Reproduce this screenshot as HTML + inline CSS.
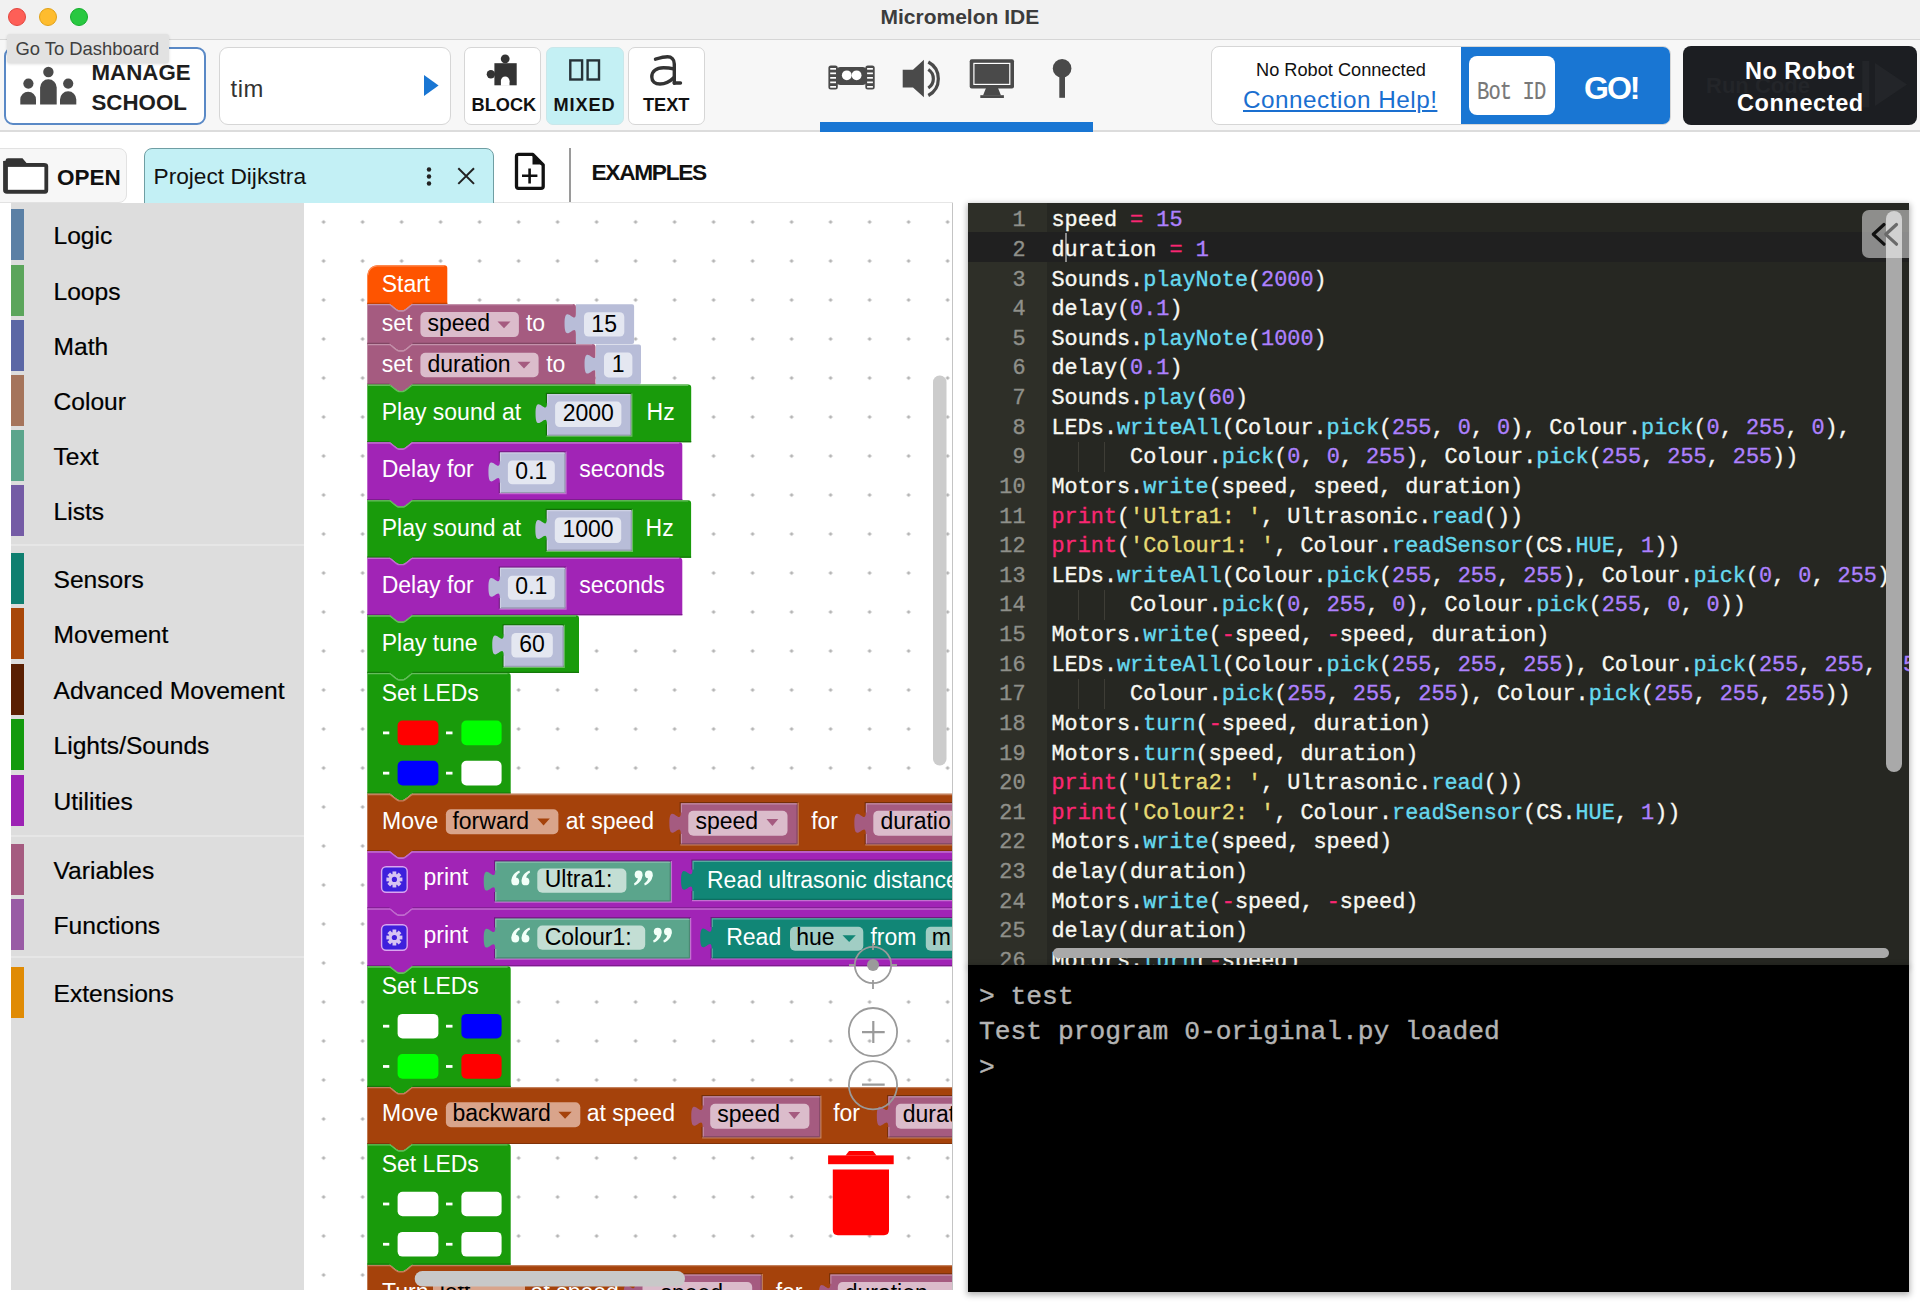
<!DOCTYPE html>
<html><head><meta charset="utf-8">
<style>
*{margin:0;padding:0;box-sizing:border-box}
html,body{width:1920px;height:1302px;overflow:hidden;background:#fff;font-family:"Liberation Sans",sans-serif;position:relative}
.a{position:absolute}
.t{position:absolute;white-space:nowrap;line-height:1}
#titlebar{left:0;top:0;width:1920px;height:40px;background:#f1f1f1;border-bottom:1px solid #d6d6d6}
.tl{position:absolute;top:8px;width:18px;height:18px;border-radius:50%}
#toolbar{left:0;top:40px;width:1920px;height:92px;background:#f7f7f7;border-bottom:2px solid #dcdcdc}
.btn{position:absolute;background:#fff;border:1.5px solid #d6d6d6;border-radius:7px}
#sidebar{left:11px;top:203px;width:293px;height:1087px;background:#dddddd}
.cat{position:absolute;left:0;width:13px;height:51px}
.cl{position:absolute;left:42.5px;font-size:24.6px;color:#000;white-space:nowrap;line-height:1;-webkit-text-stroke:0.2px #000}
.sep{position:absolute;left:0;width:293px;height:2px;background:#e6e6e6}
#editor{left:968px;top:203px;width:941px;height:762px;background:#262722;overflow:hidden;box-shadow:0 2px 6px 1px rgba(0,0,0,0.3)}
#gutter{left:0;top:0;width:79px;height:762px;background:#2e2f28}
#console{left:968px;top:965px;width:941px;height:327px;background:#000;box-shadow:0 2px 6px 1px rgba(0,0,0,0.3)}
.code{font-family:"Liberation Mono",monospace;font-size:21.83px;color:#f8f8f2;white-space:pre;line-height:29.62px;-webkit-text-stroke:0.35px currentColor}
</style></head><body>
<!-- title bar -->
<div id="titlebar" class="a">
  <div class="tl" style="left:8px;background:#fe5f57;border:1px solid #e2463f"></div>
  <div class="tl" style="left:39px;background:#febc2e;border:1px solid #e1a116"></div>
  <div class="tl" style="left:70px;background:#28c840;border:1px solid #14ae2c"></div>
  <div class="t" style="left:880.5px;top:5.5px;font-size:21px;font-weight:bold;color:#3c3c3c">Micromelon IDE</div>
</div>
<!-- toolbar -->
<div id="toolbar" class="a"></div>
<!-- manage school -->
<div class="btn" style="left:4px;top:47px;width:202px;height:78px;border:2px solid #5a89c6;border-radius:9px"></div>
<svg class="a" style="left:0;top:40px" width="90" height="90" viewBox="0 40 90 90">
 <g fill="#4a4a4a">
  <circle cx="48.4" cy="72" r="5.2"/>
  <path d="M40.1 104.4 V87.5 A8.3 8.3 0 0 1 56.7 87.5 V104.4 Z"/>
  <circle cx="28.4" cy="83.6" r="5.1"/>
  <path d="M20.3 104.4 V99.5 A7.85 7.85 0 0 1 36 99.5 V104.4 Z"/>
  <circle cx="68.2" cy="83.6" r="5.1"/>
  <path d="M60 104.4 V99.5 A8.15 8.15 0 0 1 76.3 99.5 V104.4 Z"/>
 </g>
</svg>
<div class="t" style="left:91.5px;top:62px;font-size:22.3px;font-weight:bold;color:#1e1e1e">MANAGE</div>
<div class="t" style="left:91.5px;top:91.5px;font-size:22.3px;font-weight:bold;color:#1e1e1e">SCHOOL</div>
<!-- tooltip -->
<div class="a" style="left:7px;top:34px;width:162px;height:29px;background:#e2e2e2;border-radius:3px;box-shadow:0 1px 3px rgba(0,0,0,0.15)"></div>
<div class="t" style="left:15.5px;top:40px;font-size:18.4px;color:#3f3f3f">Go To Dashboard</div>
<!-- tim -->
<div class="btn" style="left:219px;top:47px;width:232px;height:78px;border-radius:9px"></div>
<div class="t" style="left:230.5px;top:77px;font-size:23.8px;color:#333;letter-spacing:0.6px">tim</div>
<svg class="a" style="left:420px;top:70px" width="24" height="30"><path d="M4 5 L18.6 15.5 L4 26 Z" fill="#1976d3"/></svg>
<!-- BLOCK MIXED TEXT -->
<div class="btn" style="left:464px;top:47px;width:77px;height:78px"></div>
<div class="btn" style="left:546px;top:47px;width:78px;height:78px;background:#c4f0f4;border-color:#c9e7ea"></div>
<div class="btn" style="left:628px;top:47px;width:77px;height:78px"></div>
<svg class="a" style="left:464px;top:47px" width="241" height="78" viewBox="464 47 241 78">
 <g fill="#333">
  <rect x="494.4" y="63.2" width="22.3" height="22.1"/>
  <circle cx="505.2" cy="58.8" r="4.4"/>
  <circle cx="490.9" cy="74.3" r="4.2"/>
 </g>
 <circle cx="505.2" cy="80.8" r="4.3" fill="#fff"/>
 <rect x="500.9" y="80.8" width="8.6" height="5" fill="#fff"/>
 <g fill="none" stroke="#263238" stroke-width="2.4">
  <rect x="570.3" y="60.4" width="11.8" height="19.1"/>
  <rect x="587.6" y="60.4" width="11.4" height="19.1"/>
 </g>
 <g fill="none" stroke="#333" stroke-width="3.4" stroke-linecap="round">
  <path d="M655.5 59.2 C662 57.3 665 56.8 667.5 56.8 C671.5 56.8 674.3 59.5 674.3 64 V83.3"/>
  <path d="M673.6 68.8 C670 68 666 67.8 663.5 67.8 C656 67.8 651.8 71.5 651.8 77 C651.8 81.5 655 84 660 84 C665 84 670 81.5 674 77.5"/>
  <path d="M674.3 83 H680.5"/>
 </g>
</svg>
<div class="t" style="left:471.5px;top:96px;font-size:18.2px;font-weight:bold;color:#111">BLOCK</div>
<div class="t" style="left:553.5px;top:96px;font-size:18.2px;font-weight:bold;color:#111;letter-spacing:0.9px">MIXED</div>
<div class="t" style="left:643px;top:96px;font-size:18.2px;font-weight:bold;color:#111">TEXT</div>
<!-- robot icons -->
<svg class="a" style="left:815px;top:50px" width="270" height="55" viewBox="815 50 270 55">
 <g fill="#4a4a4a">
  <rect x="828.4" y="65.4" width="9.4" height="24.2" rx="2.5"/>
  <rect x="865.3" y="65.4" width="9.4" height="24.2" rx="2.5"/>
  <rect x="836" y="66.9" width="31" height="18.2" rx="4.5"/>
 </g>
 <g fill="#fff">
  <rect x="830.2" y="68" width="5.8" height="1.7"/><rect x="830.2" y="72.5" width="5.8" height="1.7"/><rect x="830.2" y="77" width="5.8" height="1.7"/><rect x="830.2" y="81.5" width="5.8" height="1.7"/><rect x="830.2" y="86" width="5.8" height="1.7"/>
  <rect x="867.1" y="68" width="5.8" height="1.7"/><rect x="867.1" y="72.5" width="5.8" height="1.7"/><rect x="867.1" y="77" width="5.8" height="1.7"/><rect x="867.1" y="81.5" width="5.8" height="1.7"/><rect x="867.1" y="86" width="5.8" height="1.7"/>
  <circle cx="846.8" cy="75.3" r="4.9"/><circle cx="856.6" cy="75.3" r="4.9"/>
 </g>
 <g fill="#4a4a4a">
  <path d="M902.7 69.8 H913 L923.9 59.7 V97.3 L913 87.6 H902.7 Z"/>
  <rect x="969.7" y="59.2" width="44.3" height="29.4" rx="2"/>
  <path d="M986 88 H998 L1001 95.4 H983 Z"/>
  <rect x="980.3" y="95.2" width="23.6" height="2.8"/>
  <circle cx="1062.1" cy="68.4" r="9.3"/>
  <rect x="1059.3" y="70" width="5.7" height="27.8"/>
 </g>
 <rect x="973.3" y="62.8" width="37.1" height="22.2" fill="#fff"/>
 <rect x="974.5" y="64" width="34.7" height="19.8" fill="#4a4a4a"/>
 <g fill="none" stroke="#4a4a4a" stroke-width="3.2">
  <path d="M928.3 69.5 A11 11 0 0 1 928.3 88"/>
  <path d="M928.3 62 A19 19 0 0 1 928.3 95.5"/>
 </g>
</svg>
<div class="a" style="left:820px;top:122px;width:273px;height:10px;background:#1976d3"></div>
<!-- connection -->
<div class="a" style="left:1211px;top:46px;width:460px;height:79px;background:#fff;border:1.5px solid #d6d6d6;border-radius:8px;overflow:hidden">
  <div class="a" style="left:249px;top:-2px;width:212px;height:82px;background:#1976d3"></div>
</div>
<div class="t" style="left:1256px;top:60.5px;font-size:18.2px;color:#111">No Robot Connected</div>
<div class="t" style="left:1243px;top:88px;font-size:24.3px;letter-spacing:0.5px;color:#1a6fd0;text-decoration:underline;text-decoration-thickness:2px;text-underline-offset:2px">Connection Help!</div>
<div class="a" style="left:1469px;top:56px;width:86px;height:59px;background:#fff;border-radius:8px"></div>
<div class="t" style="left:1477px;top:81px;font-family:'Liberation Mono',monospace;font-size:20.5px;letter-spacing:-0.9px;color:#787878;-webkit-text-stroke:0.15px #787878;transform:scaleY(1.23);transform-origin:0 0">Bot ID</div>
<div class="t" style="left:1584px;top:71.5px;font-size:32px;letter-spacing:-2px;font-weight:bold;color:#fff">GO!</div>
<!-- run -->
<div class="a" style="left:1683px;top:46px;width:234px;height:79px;background:#1c1e22;border-radius:8px"></div>
<div class="t" style="left:1706px;top:75px;font-size:22px;font-weight:bold;color:#232529">Run Code</div>
<svg class="a" style="left:1855px;top:55px" width="60" height="60" viewBox="1855 55 60 60"><rect x="1862.3" y="61" width="7" height="46.4" fill="#232529"/><path d="M1875 63 L1907 84.5 L1875 106 Z" fill="#232529"/></svg>
<div class="t" style="left:1745px;top:60px;font-size:23.5px;letter-spacing:0.5px;font-weight:bold;color:#fff">No Robot</div>
<div class="t" style="left:1737px;top:91.5px;font-size:23.5px;letter-spacing:0.6px;font-weight:bold;color:#fff">Connected</div>

<!-- tab bar -->
<div class="a" style="left:-8px;top:148px;width:135px;height:55px;background:#f7f7f7;border:1.5px solid #e2e2e2;border-radius:8px"></div>
<svg class="a" style="left:0;top:150px" width="60" height="50" viewBox="0 150 60 50">
 <path d="M5.5 160.7 Q5.5 158.3 8 158.3 H22.5 L26.5 162.9 H44 Q48.2 162.9 48.2 166 V190 Q48.2 193.8 45 193.8 H7 Q3.1 193.8 3.1 190 V161 Z" fill="#333"/>
 <rect x="7.9" y="166.9" width="36.5" height="22.9" fill="#fff"/>
</svg>
<div class="t" style="left:57px;top:166.5px;font-size:22.5px;font-weight:bold;color:#111">OPEN</div>
<div class="a" style="left:144px;top:148px;width:350px;height:60px;background:#c3f0f5;border:1.5px solid #6f9ea3;border-radius:8px 8px 0 0"></div>
<div class="t" style="left:153.5px;top:165.3px;font-size:22.7px;color:#111">Project Dijkstra</div>
<svg class="a" style="left:410px;top:155px" width="80" height="40" viewBox="410 155 80 40">
 <g fill="#222"><circle cx="429" cy="169.5" r="2.2"/><circle cx="429" cy="176.5" r="2.2"/><circle cx="429" cy="183.5" r="2.2"/></g>
 <path d="M458.3 168.2 L474 183.9 M474 168.2 L458.3 183.9" stroke="#222" stroke-width="2" fill="none"/>
</svg>
<svg class="a" style="left:505px;top:145px" width="50" height="50" viewBox="505 145 50 50">
 <path d="M518.5 154.3 H532.8 L543.2 165 V186.5 Q543.2 188.3 541 188.3 H518.5 Q516.5 188.3 516.5 186.3 V156.3 Q516.5 154.3 518.5 154.3 Z" fill="none" stroke="#111" stroke-width="3.3" stroke-linejoin="round"/>
 <path d="M532.5 154 V164.5 H543.5 Z" fill="#111"/>
 <path d="M522 175.8 H537.4 M529.6 168.5 V183.5" stroke="#111" stroke-width="2.6"/>
</svg>
<div class="a" style="left:569px;top:148px;width:2px;height:55px;background:#9a9a9a"></div>
<div class="t" style="left:591.5px;top:161.3px;font-size:22.7px;letter-spacing:-1.3px;font-weight:bold;color:#111">EXAMPLES</div>
<div class="a" style="left:494px;top:202px;width:459px;height:2px;background:#e6e6e6"></div>
<!-- sidebar -->
<div id="sidebar" class="a">
 <div class="cat" style="top:6px;background:#5b80a5"></div><div class="cl" style="top:21px">Logic</div>
 <div class="cat" style="top:61.5px;background:#5ba55b"></div><div class="cl" style="top:76.5px">Loops</div>
 <div class="cat" style="top:117px;background:#5b67a5"></div><div class="cl" style="top:132px">Math</div>
 <div class="cat" style="top:172px;background:#a5745b"></div><div class="cl" style="top:187px">Colour</div>
 <div class="cat" style="top:227px;background:#5ba58c"></div><div class="cl" style="top:242px">Text</div>
 <div class="cat" style="top:282px;background:#745ba5"></div><div class="cl" style="top:297px">Lists</div>
 <div class="cat" style="top:350px;background:#0f7f70"></div><div class="cl" style="top:365px">Sensors</div>
 <div class="cat" style="top:405.29999999999995px;background:#a84709"></div><div class="cl" style="top:420.3px">Movement</div>
 <div class="cat" style="top:460.6px;background:#5a1f02"></div><div class="cl" style="top:475.6px">Advanced Movement</div>
 <div class="cat" style="top:516px;background:#139a0e"></div><div class="cl" style="top:531px">Lights/Sounds</div>
 <div class="cat" style="top:571.5px;background:#9c22b4"></div><div class="cl" style="top:586.5px">Utilities</div>
 <div class="cat" style="top:640.8px;background:#a55b80"></div><div class="cl" style="top:655.8px">Variables</div>
 <div class="cat" style="top:696px;background:#995ba5"></div><div class="cl" style="top:711px">Functions</div>
 <div class="cat" style="top:764px;background:#e08b04"></div><div class="cl" style="top:779px">Extensions</div>
 <div class="sep" style="top:340.5px"></div>
 <div class="sep" style="top:631.5px"></div>
 <div class="sep" style="top:753px"></div>
</div>
<!-- workspace -->
<!-- WS -->
<svg class="a" style="left:304px;top:203px" width="649" height="1087" viewBox="304 203 649 1087">
<defs><pattern id="dots" x="323.6" y="222" width="39" height="39" patternUnits="userSpaceOnUse"><g transform="translate(0,0)"><rect x="-2.1" y="-0.65" width="4.2" height="1.3" fill="#c4c4c4"/><rect x="-0.65" y="-2.1" width="1.3" height="4.2" fill="#c4c4c4"/><circle r="1.2" fill="#b4b4b4"/></g><g transform="translate(39,0)"><rect x="-2.1" y="-0.65" width="4.2" height="1.3" fill="#c4c4c4"/><rect x="-0.65" y="-2.1" width="1.3" height="4.2" fill="#c4c4c4"/><circle r="1.2" fill="#b4b4b4"/></g><g transform="translate(0,39)"><rect x="-2.1" y="-0.65" width="4.2" height="1.3" fill="#c4c4c4"/><rect x="-0.65" y="-2.1" width="1.3" height="4.2" fill="#c4c4c4"/><circle r="1.2" fill="#b4b4b4"/></g><g transform="translate(39,39)"><rect x="-2.1" y="-0.65" width="4.2" height="1.3" fill="#c4c4c4"/><rect x="-0.65" y="-2.1" width="1.3" height="4.2" fill="#c4c4c4"/><circle r="1.2" fill="#b4b4b4"/></g></pattern><clipPath id="wsclip"><rect x="304" y="203" width="648.5" height="1087"/></clipPath></defs>
<rect x="304" y="203" width="649" height="1087" fill="#fff"/><rect x="304" y="203" width="649" height="1087" fill="url(#dots)"/>
<g clip-path="url(#wsclip)" style="font-family:'Liberation Sans',sans-serif">
<path d="M367.3,275.2 A10,10 0 0 1 377.3,265.2 H444.3 A3,3 0 0 1 447.3,268.2 V304 H412.50 C411.00,304 405.50,310.3 403.00,310.3 H399.00 C396.50,310.3 391.00,304 389.50,304 H367.3 Z" fill="#fe5400" />
<path d="M367.90000000000003,275.2 A9.4,9.4 0 0 1 377.3,265.8 H444.3" fill="none" stroke="#fe8c54" stroke-width="1.3"/>
<path d="M367.3,303.4 H389.5 M412.5,303.4 H447.3" fill="none" stroke="#c64200" stroke-width="1.2"/>
<text x="381.70" y="292.30" fill="#fff" font-size="23" >Start</text>
<path d="M367.3,304 H389.50 C391.00,304 396.50,310.3 399.00,310.3 H403.00 C405.50,310.3 411.00,304 412.50,304 H572.9 A3,3 0 0 1 575.9,307 V344 H412.50 C411.00,344 405.50,350.3 403.00,350.3 H399.00 C396.50,350.3 391.00,344 389.50,344 H367.3 Z" fill="#a55b80" />
<path d="M367.3,304.7 H389.50 C391.00,304.7 396.50,311.0 399.00,311.0 H403.00 C405.50,311.0 411.00,304.7 412.50,304.7 H572.9" fill="none" stroke="#c391aa" stroke-width="1.3"/>
<path d="M367.3,343.4 H389.5 M412.5,343.4 H575.9" fill="none" stroke="#814764" stroke-width="1.2"/>
<text x="381.70" y="331.40" fill="#fff" font-size="23" >set</text>
<rect x="420.40" y="312.10" width="98.50" height="25.00" rx="5" fill="#dbbccb" />
<text x="427.45" y="331.40" fill="#000" font-size="23" >speed</text>
<path d="M497.5,321.5 H510.5 L504.0,328.2 Z" fill="#a55b80" />
<text x="525.90" y="331.40" fill="#fff" font-size="23" >to</text>
<path d="M576,304.2 H632.1 A2,2 0 0 1 634.1,306.2 V342 A2,2 0 0 1 632.1,344 H576 V334.50 c0,-14.33 -11.46,11.46 -11.46,-10.75 s11.46,3.58 11.46,-10.75 Z" fill="#b8bdd8" />
<rect x="584.00" y="312.30" width="40.30" height="24.20" rx="4.5" fill="#e4e7f1" />
<text x="604.15" y="332.00" fill="#000" font-size="23" text-anchor="middle" >15</text>
<path d="M367.3,344 H389.50 C391.00,344 396.50,350.3 399.00,350.3 H403.00 C405.50,350.3 411.00,344 412.50,344 H592.5 A3,3 0 0 1 595.5,347 V384.6 H412.50 C411.00,384.6 405.50,390.90000000000003 403.00,390.90000000000003 H399.00 C396.50,390.90000000000003 391.00,384.6 389.50,384.6 H367.3 Z" fill="#a55b80" />
<path d="M367.3,344.7 H389.50 C391.00,344.7 396.50,351.0 399.00,351.0 H403.00 C405.50,351.0 411.00,344.7 412.50,344.7 H592.5" fill="none" stroke="#c391aa" stroke-width="1.3"/>
<path d="M367.3,384.0 H389.5 M412.5,384.0 H595.5" fill="none" stroke="#814764" stroke-width="1.2"/>
<text x="381.70" y="371.50" fill="#fff" font-size="23" >set</text>
<rect x="420.40" y="352.70" width="118.20" height="24.50" rx="5" fill="#dbbccb" />
<text x="427.45" y="371.50" fill="#000" font-size="23" >duration</text>
<path d="M517.5,361.7 H530.5 L524.0,368.4 Z" fill="#a55b80" />
<text x="546.20" y="371.50" fill="#fff" font-size="23" >to</text>
<path d="M596,344.6 H639 A2,2 0 0 1 641,346.6 V382.6 A2,2 0 0 1 639,384.6 H596 V374.90 c0,-14.33 -11.46,11.46 -11.46,-10.75 s11.46,3.58 11.46,-10.75 Z" fill="#b8bdd8" />
<rect x="604.00" y="352.60" width="28.40" height="24.80" rx="4.5" fill="#e4e7f1" />
<text x="618.20" y="372.40" fill="#000" font-size="23" text-anchor="middle" >1</text>
<path d="M367.3,384.6 H389.50 C391.00,384.6 396.50,390.90000000000003 399.00,390.90000000000003 H403.00 C405.50,390.90000000000003 411.00,384.6 412.50,384.6 H688.2 A3,3 0 0 1 691.2,387.6 V442.3 H412.50 C411.00,442.3 405.50,448.6 403.00,448.6 H399.00 C396.50,448.6 391.00,442.3 389.50,442.3 H367.3 Z" fill="#199b0b" />
<path d="M367.3,385.3 H389.50 C391.00,385.3 396.50,391.6 399.00,391.6 H403.00 C405.50,391.6 411.00,385.3 412.50,385.3 H688.2" fill="none" stroke="#65bc5c" stroke-width="1.3"/>
<path d="M367.3,441.7 H389.5 M412.5,441.7 H691.2" fill="none" stroke="#147909" stroke-width="1.2"/>
<text x="381.70" y="420.00" fill="#fff" font-size="23" >Play sound at</text>
<path d="M546.5,435.8 V424.40 M546.5,402.90 V393.5 H631.8000000000001" fill="none" stroke="#126c08" stroke-width="1.3"/>
<path d="M546.5,436.20000000000005 H631.8000000000001 V393.5" fill="none" stroke="#6abe60" stroke-width="1.3"/>
<path d="M547,394.1 H629.2 A2,2 0 0 1 631.2,396.1 V433.6 A2,2 0 0 1 629.2,435.6 H547 V424.40 c0,-14.33 -11.46,11.46 -11.46,-10.75 s11.46,3.58 11.46,-10.75 Z" fill="#b8bdd8" />
<path d="M547.6,435.0 H630.6 V394.70000000000005" fill="none" stroke="#979bb1" stroke-width="1.1"/>
<path d="M547.6,424.40 V435.0 M547.6,402.90 V394.70000000000005 H630.6" fill="none" stroke="#cdd1e4" stroke-width="1.1"/>
<rect x="555.10" y="401.60" width="66.30" height="25.40" rx="4.5" fill="#e4e7f1" />
<text x="588.25" y="421.30" fill="#000" font-size="23" text-anchor="middle" >2000</text>
<text x="646.60" y="420.00" fill="#fff" font-size="23" >Hz</text>
<path d="M367.3,442.3 H389.50 C391.00,442.3 396.50,448.6 399.00,448.6 H403.00 C405.50,448.6 411.00,442.3 412.50,442.3 H679.3 A3,3 0 0 1 682.3,445.3 V500.2 H412.50 C411.00,500.2 405.50,506.5 403.00,506.5 H399.00 C396.50,506.5 391.00,500.2 389.50,500.2 H367.3 Z" fill="#a124b6" />
<path d="M367.3,443.0 H389.50 C391.00,443.0 396.50,449.3 399.00,449.3 H403.00 C405.50,449.3 411.00,443.0 412.50,443.0 H679.3" fill="none" stroke="#c06cce" stroke-width="1.3"/>
<path d="M367.3,499.59999999999997 H389.5 M412.5,499.59999999999997 H682.3" fill="none" stroke="#7e1c8e" stroke-width="1.2"/>
<text x="381.70" y="477.20" fill="#fff" font-size="23" >Delay for</text>
<path d="M499.4,493.3 V482.70 M499.4,461.20 V451.79999999999995 H566.0" fill="none" stroke="#71197f" stroke-width="1.3"/>
<path d="M499.4,493.70000000000005 H566.0 V451.79999999999995" fill="none" stroke="#c271d0" stroke-width="1.3"/>
<path d="M499.9,452.4 H563.4 A2,2 0 0 1 565.4,454.4 V491.1 A2,2 0 0 1 563.4,493.1 H499.9 V482.70 c0,-14.33 -11.46,11.46 -11.46,-10.75 s11.46,3.58 11.46,-10.75 Z" fill="#b8bdd8" />
<path d="M500.5,492.5 H564.8 V453.0" fill="none" stroke="#979bb1" stroke-width="1.1"/>
<path d="M500.5,482.70 V492.5 M500.5,461.20 V453.0 H564.8" fill="none" stroke="#cdd1e4" stroke-width="1.1"/>
<rect x="507.90" y="460.40" width="46.90" height="23.90" rx="4.5" fill="#e4e7f1" />
<text x="531.35" y="478.50" fill="#000" font-size="23" text-anchor="middle" >0.1</text>
<text x="579.20" y="477.20" fill="#fff" font-size="23" >seconds</text>
<path d="M367.3,500.2 H389.50 C391.00,500.2 396.50,506.5 399.00,506.5 H403.00 C405.50,506.5 411.00,500.2 412.50,500.2 H688.1 A3,3 0 0 1 691.1,503.2 V557.7 H412.50 C411.00,557.7 405.50,564.0 403.00,564.0 H399.00 C396.50,564.0 391.00,557.7 389.50,557.7 H367.3 Z" fill="#199b0b" />
<path d="M367.3,500.9 H389.50 C391.00,500.9 396.50,507.2 399.00,507.2 H403.00 C405.50,507.2 411.00,500.9 412.50,500.9 H688.1" fill="none" stroke="#65bc5c" stroke-width="1.3"/>
<path d="M367.3,557.1 H389.5 M412.5,557.1 H691.1" fill="none" stroke="#147909" stroke-width="1.2"/>
<text x="381.70" y="535.60" fill="#fff" font-size="23" >Play sound at</text>
<path d="M546.3,550.9000000000001 V540.30 M546.3,518.80 V509.4 H632.4" fill="none" stroke="#126c08" stroke-width="1.3"/>
<path d="M546.3,551.3000000000001 H632.4 V509.4" fill="none" stroke="#6abe60" stroke-width="1.3"/>
<path d="M546.8,510 H629.8 A2,2 0 0 1 631.8,512 V548.7 A2,2 0 0 1 629.8,550.7 H546.8 V540.30 c0,-14.33 -11.46,11.46 -11.46,-10.75 s11.46,3.58 11.46,-10.75 Z" fill="#b8bdd8" />
<path d="M547.4,550.1 H631.1999999999999 V510.6" fill="none" stroke="#979bb1" stroke-width="1.1"/>
<path d="M547.4,540.30 V550.1 M547.4,518.80 V510.6 H631.1999999999999" fill="none" stroke="#cdd1e4" stroke-width="1.1"/>
<rect x="554.80" y="517.50" width="66.40" height="25.50" rx="4.5" fill="#e4e7f1" />
<text x="588.00" y="536.90" fill="#000" font-size="23" text-anchor="middle" >1000</text>
<text x="645.60" y="535.60" fill="#fff" font-size="23" >Hz</text>
<path d="M367.3,557.7 H389.50 C391.00,557.7 396.50,564.0 399.00,564.0 H403.00 C405.50,564.0 411.00,557.7 412.50,557.7 H679.3 A3,3 0 0 1 682.3,560.7 V615.3 H412.50 C411.00,615.3 405.50,621.5999999999999 403.00,621.5999999999999 H399.00 C396.50,621.5999999999999 391.00,615.3 389.50,615.3 H367.3 Z" fill="#a124b6" />
<path d="M367.3,558.4000000000001 H389.50 C391.00,558.4000000000001 396.50,564.7 399.00,564.7 H403.00 C405.50,564.7 411.00,558.4000000000001 412.50,558.4000000000001 H679.3" fill="none" stroke="#c06cce" stroke-width="1.3"/>
<path d="M367.3,614.6999999999999 H389.5 M412.5,614.6999999999999 H682.3" fill="none" stroke="#7e1c8e" stroke-width="1.2"/>
<text x="381.70" y="593.10" fill="#fff" font-size="23" >Delay for</text>
<path d="M499.4,608.7 V598.10 M499.4,576.60 V567.1999999999999 H566.0" fill="none" stroke="#71197f" stroke-width="1.3"/>
<path d="M499.4,609.1 H566.0 V567.1999999999999" fill="none" stroke="#c271d0" stroke-width="1.3"/>
<path d="M499.9,567.8 H563.4 A2,2 0 0 1 565.4,569.8 V606.5 A2,2 0 0 1 563.4,608.5 H499.9 V598.10 c0,-14.33 -11.46,11.46 -11.46,-10.75 s11.46,3.58 11.46,-10.75 Z" fill="#b8bdd8" />
<path d="M500.5,607.9 H564.8 V568.4" fill="none" stroke="#979bb1" stroke-width="1.1"/>
<path d="M500.5,598.10 V607.9 M500.5,576.60 V568.4 H564.8" fill="none" stroke="#cdd1e4" stroke-width="1.1"/>
<rect x="507.90" y="575.80" width="46.90" height="23.90" rx="4.5" fill="#e4e7f1" />
<text x="531.35" y="594.40" fill="#000" font-size="23" text-anchor="middle" >0.1</text>
<text x="579.20" y="593.10" fill="#fff" font-size="23" >seconds</text>
<path d="M367.3,615.3 H389.50 C391.00,615.3 396.50,621.5999999999999 399.00,621.5999999999999 H403.00 C405.50,621.5999999999999 411.00,615.3 412.50,615.3 H576 A3,3 0 0 1 579,618.3 V673 H412.50 C411.00,673 405.50,679.3 403.00,679.3 H399.00 C396.50,679.3 391.00,673 389.50,673 H367.3 Z" fill="#199b0b" />
<path d="M367.3,616.0 H389.50 C391.00,616.0 396.50,622.3 399.00,622.3 H403.00 C405.50,622.3 411.00,616.0 412.50,616.0 H576" fill="none" stroke="#65bc5c" stroke-width="1.3"/>
<path d="M367.3,672.4 H389.5 M412.5,672.4 H579" fill="none" stroke="#147909" stroke-width="1.2"/>
<text x="381.70" y="650.70" fill="#fff" font-size="23" >Play tune</text>
<path d="M503.2,667.0 V655.70 M503.2,634.20 V624.8 H564.2" fill="none" stroke="#126c08" stroke-width="1.3"/>
<path d="M503.2,667.4 H564.2 V624.8" fill="none" stroke="#6abe60" stroke-width="1.3"/>
<path d="M503.7,625.4 H561.6 A2,2 0 0 1 563.6,627.4 V664.8 A2,2 0 0 1 561.6,666.8 H503.7 V655.70 c0,-14.33 -11.46,11.46 -11.46,-10.75 s11.46,3.58 11.46,-10.75 Z" fill="#b8bdd8" />
<path d="M504.3,666.1999999999999 H563.0 V626.0" fill="none" stroke="#979bb1" stroke-width="1.1"/>
<path d="M504.3,655.70 V666.1999999999999 M504.3,634.20 V626.0 H563.0" fill="none" stroke="#cdd1e4" stroke-width="1.1"/>
<rect x="511.40" y="633.00" width="41.40" height="24.60" rx="4.5" fill="#e4e7f1" />
<text x="532.10" y="652.00" fill="#000" font-size="23" text-anchor="middle" >60</text>
<path d="M367.3,673 H389.50 C391.00,673 396.50,679.3 399.00,679.3 H403.00 C405.50,679.3 411.00,673 412.50,673 H507.7 A3,3 0 0 1 510.7,676 V793.6 H412.50 C411.00,793.6 405.50,799.9 403.00,799.9 H399.00 C396.50,799.9 391.00,793.6 389.50,793.6 H367.3 Z" fill="#199b0b" />
<path d="M367.3,673.7 H389.50 C391.00,673.7 396.50,680.0 399.00,680.0 H403.00 C405.50,680.0 411.00,673.7 412.50,673.7 H507.7" fill="none" stroke="#65bc5c" stroke-width="1.3"/>
<path d="M367.3,793.0 H389.5 M412.5,793.0 H510.7" fill="none" stroke="#147909" stroke-width="1.2"/>
<text x="381.70" y="700.60" fill="#fff" font-size="23" >Set LEDs</text>
<rect x="383.00" y="731.50" width="6.30" height="2.80" rx="0" fill="#fff" />
<rect x="446.00" y="731.50" width="6.50" height="2.80" rx="0" fill="#fff" />
<rect x="397.60" y="720.60" width="40.80" height="24.60" rx="5" fill="#ff0000" />
<rect x="461.40" y="720.60" width="40.20" height="24.60" rx="5" fill="#00ff00" />
<rect x="383.00" y="771.75" width="6.30" height="2.80" rx="0" fill="#fff" />
<rect x="446.00" y="771.75" width="6.50" height="2.80" rx="0" fill="#fff" />
<rect x="397.60" y="760.80" width="40.80" height="24.70" rx="5" fill="#0000ff" />
<rect x="461.40" y="760.80" width="40.20" height="24.70" rx="5" fill="#ffffff" />
<path d="M367.3,793.8 H389.50 C391.00,793.8 396.50,800.0999999999999 399.00,800.0999999999999 H403.00 C405.50,800.0999999999999 411.00,793.8 412.50,793.8 H997 A3,3 0 0 1 1000,796.8 V851.3 H412.50 C411.00,851.3 405.50,857.5999999999999 403.00,857.5999999999999 H399.00 C396.50,857.5999999999999 391.00,851.3 389.50,851.3 H367.3 Z" fill="#a5420b" />
<path d="M367.3,794.5 H389.50 C391.00,794.5 396.50,800.8 399.00,800.8 H403.00 C405.50,800.8 411.00,794.5 412.50,794.5 H997" fill="none" stroke="#c3805c" stroke-width="1.3"/>
<path d="M367.3,850.6999999999999 H389.5 M412.5,850.6999999999999 H1000" fill="none" stroke="#813309" stroke-width="1.2"/>
<text x="382.10" y="828.75" fill="#fff" font-size="23" >Move</text>
<rect x="445.90" y="809.20" width="112.50" height="25.00" rx="5" fill="#d9a48b" />
<text x="452.45" y="828.75" fill="#000" font-size="23" >forward</text>
<path d="M537.3,818.6 H549.8 L543.55,825.6 Z" fill="#a5420b" />
<text x="565.70" y="828.75" fill="#fff" font-size="23" >at speed</text>
<path d="M680.3,844.4000000000001 V834.00 M680.3,812.50 V802.6999999999999 H798.1" fill="none" stroke="#732e08" stroke-width="1.3"/>
<path d="M680.3,844.8000000000001 H798.1 V802.6999999999999" fill="none" stroke="#c48460" stroke-width="1.3"/>
<path d="M680.8,803.3 H795.5 A2,2 0 0 1 797.5,805.3 V842.2 A2,2 0 0 1 795.5,844.2 H680.8 V834.00 c0,-14.33 -11.46,11.46 -11.46,-10.75 s11.46,3.58 11.46,-10.75 Z" fill="#a55b80" />
<path d="M681.4,843.6 H796.9 V803.9" fill="none" stroke="#874b69" stroke-width="1.1"/>
<path d="M681.4,834.00 V843.6 M681.4,812.50 V803.9 H796.9" fill="none" stroke="#c08ca6" stroke-width="1.1"/>
<rect x="688.30" y="810.80" width="99.20" height="25.00" rx="5" fill="#dbbccb" />
<text x="695.40" y="829.30" fill="#000" font-size="23" >speed</text>
<path d="M766.5,819.0999999999999 H778.3 L772.4,825.9 Z" fill="#a55b80" />
<text x="811.20" y="828.75" fill="#fff" font-size="23" >for</text>
<path d="M865.3,844.4000000000001 V834.00 M865.3,812.50 V802.6999999999999 H1100.6" fill="none" stroke="#732e08" stroke-width="1.3"/>
<path d="M865.3,844.8000000000001 H1100.6 V802.6999999999999" fill="none" stroke="#c48460" stroke-width="1.3"/>
<path d="M865.8,803.3 H1098 A2,2 0 0 1 1100,805.3 V842.2 A2,2 0 0 1 1098,844.2 H865.8 V834.00 c0,-14.33 -11.46,11.46 -11.46,-10.75 s11.46,3.58 11.46,-10.75 Z" fill="#a55b80" />
<path d="M866.4,843.6 H1099.4 V803.9" fill="none" stroke="#874b69" stroke-width="1.1"/>
<path d="M866.4,834.00 V843.6 M866.4,812.50 V803.9 H1099.4" fill="none" stroke="#c08ca6" stroke-width="1.1"/>
<rect x="873.30" y="810.80" width="176.70" height="25.00" rx="5" fill="#dbbccb" />
<text x="880.40" y="829.30" fill="#000" font-size="23" >duration</text>
<path d="M367.3,851.3 H389.50 C391.00,851.3 396.50,857.5999999999999 399.00,857.5999999999999 H403.00 C405.50,857.5999999999999 411.00,851.3 412.50,851.3 H997 A3,3 0 0 1 1000,854.3 V908.4 H412.50 C411.00,908.4 405.50,914.6999999999999 403.00,914.6999999999999 H399.00 C396.50,914.6999999999999 391.00,908.4 389.50,908.4 H367.3 Z" fill="#a124b6" />
<path d="M367.3,852.0 H389.50 C391.00,852.0 396.50,858.3 399.00,858.3 H403.00 C405.50,858.3 411.00,852.0 412.50,852.0 H997" fill="none" stroke="#c06cce" stroke-width="1.3"/>
<path d="M367.3,907.8 H389.5 M412.5,907.8 H1000" fill="none" stroke="#7e1c8e" stroke-width="1.2"/>
<rect x="381.60" y="866.75" width="25.60" height="25.50" rx="4.5" fill="#3e1fdc" stroke="#d9a6ef" stroke-width="1.4"/>
<g transform="translate(394.4,879.45)" fill="#d8c4f2"><rect x="-1.9" y="-8" width="3.8" height="4.5" transform="rotate(0)"/><rect x="-1.9" y="-8" width="3.8" height="4.5" transform="rotate(45)"/><rect x="-1.9" y="-8" width="3.8" height="4.5" transform="rotate(90)"/><rect x="-1.9" y="-8" width="3.8" height="4.5" transform="rotate(135)"/><rect x="-1.9" y="-8" width="3.8" height="4.5" transform="rotate(180)"/><rect x="-1.9" y="-8" width="3.8" height="4.5" transform="rotate(225)"/><rect x="-1.9" y="-8" width="3.8" height="4.5" transform="rotate(270)"/><rect x="-1.9" y="-8" width="3.8" height="4.5" transform="rotate(315)"/><circle r="5.6"/></g>
<circle cx="394.4" cy="879.45" r="2.6" fill="#3e1fdc"/>
<text x="423.50" y="885.00" fill="#fff" font-size="23" >print</text>
<path d="M494.7,901.6 V891.90 M494.7,870.40 V861.0 H671.4" fill="none" stroke="#71197f" stroke-width="1.3"/>
<path d="M494.7,902.0 H671.4 V861.0" fill="none" stroke="#c271d0" stroke-width="1.3"/>
<path d="M495.2,861.6 H668.8 A2,2 0 0 1 670.8,863.6 V899.4 A2,2 0 0 1 668.8,901.4 H495.2 V891.90 c0,-14.33 -11.46,11.46 -11.46,-10.75 s11.46,3.58 11.46,-10.75 Z" fill="#5ba58c" />
<path d="M495.8,900.8 H670.1999999999999 V862.2" fill="none" stroke="#4b8773" stroke-width="1.1"/>
<path d="M495.8,891.90 V900.8 M495.8,870.40 V862.2 H670.1999999999999" fill="none" stroke="#8cc0ae" stroke-width="1.1"/>
<circle cx="515.30" cy="881.40" r="3.9" fill="#f2fff8"/>
<path d="M511.50,881.00 C511.50,876.00 514.80,872.00 519.30,870.40 L519.90,872.40 C517.10,874.00 515.90,876.00 515.90,879.00 Z" fill="#f2fff8" />
<circle cx="525.50" cy="881.40" r="3.9" fill="#f2fff8"/>
<path d="M521.70,881.00 C521.70,876.00 525.00,872.00 529.50,870.40 L530.10,872.40 C527.30,874.00 526.10,876.00 526.10,879.00 Z" fill="#f2fff8" />
<rect x="537.30" y="868.60" width="89.10" height="24.20" rx="5" fill="#c3ded4" />
<text x="544.70" y="887.30" fill="#000" font-size="23" >Ultra1:</text>
<circle cx="638.60" cy="874.40" r="3.9" fill="#f2fff8"/>
<path d="M642.40,874.80 C642.40,879.80 639.10,883.80 634.60,885.40 L634.00,883.40 C636.80,881.80 638.00,879.80 638.00,876.80 Z" fill="#f2fff8" />
<circle cx="648.80" cy="874.40" r="3.9" fill="#f2fff8"/>
<path d="M652.60,874.80 C652.60,879.80 649.30,883.80 644.80,885.40 L644.20,883.40 C647.00,881.80 648.20,879.80 648.20,876.80 Z" fill="#f2fff8" />
<path d="M692.0,900.2 V891.10 M692.0,869.60 V860.1999999999999 H1100.6" fill="none" stroke="#71197f" stroke-width="1.3"/>
<path d="M692.0,900.6 H1100.6 V860.1999999999999" fill="none" stroke="#c271d0" stroke-width="1.3"/>
<path d="M692.5,860.8 H1098 A2,2 0 0 1 1100,862.8 V898 A2,2 0 0 1 1098,900 H692.5 V891.10 c0,-14.33 -11.46,11.46 -11.46,-10.75 s11.46,3.58 11.46,-10.75 Z" fill="#118676" />
<path d="M693.1,899.4 H1099.4 V861.4" fill="none" stroke="#0e6e61" stroke-width="1.1"/>
<path d="M693.1,891.10 V899.4 M693.1,869.60 V861.4 H1099.4" fill="none" stroke="#58aa9f" stroke-width="1.1"/>
<text x="707.00" y="887.50" fill="#fff" font-size="23" >Read ultrasonic distance</text>
<path d="M367.3,908.4 H389.50 C391.00,908.4 396.50,914.6999999999999 399.00,914.6999999999999 H403.00 C405.50,914.6999999999999 411.00,908.4 412.50,908.4 H997 A3,3 0 0 1 1000,911.4 V966.3 H412.50 C411.00,966.3 405.50,972.5999999999999 403.00,972.5999999999999 H399.00 C396.50,972.5999999999999 391.00,966.3 389.50,966.3 H367.3 Z" fill="#a124b6" />
<path d="M367.3,909.1 H389.50 C391.00,909.1 396.50,915.4 399.00,915.4 H403.00 C405.50,915.4 411.00,909.1 412.50,909.1 H997" fill="none" stroke="#c06cce" stroke-width="1.3"/>
<path d="M367.3,965.6999999999999 H389.5 M412.5,965.6999999999999 H1000" fill="none" stroke="#7e1c8e" stroke-width="1.2"/>
<rect x="381.60" y="924.80" width="25.60" height="25.50" rx="4.5" fill="#3e1fdc" stroke="#d9a6ef" stroke-width="1.4"/>
<g transform="translate(394.4,937.5)" fill="#d8c4f2"><rect x="-1.9" y="-8" width="3.8" height="4.5" transform="rotate(0)"/><rect x="-1.9" y="-8" width="3.8" height="4.5" transform="rotate(45)"/><rect x="-1.9" y="-8" width="3.8" height="4.5" transform="rotate(90)"/><rect x="-1.9" y="-8" width="3.8" height="4.5" transform="rotate(135)"/><rect x="-1.9" y="-8" width="3.8" height="4.5" transform="rotate(180)"/><rect x="-1.9" y="-8" width="3.8" height="4.5" transform="rotate(225)"/><rect x="-1.9" y="-8" width="3.8" height="4.5" transform="rotate(270)"/><rect x="-1.9" y="-8" width="3.8" height="4.5" transform="rotate(315)"/><circle r="5.6"/></g>
<circle cx="394.4" cy="937.5" r="2.6" fill="#3e1fdc"/>
<text x="423.50" y="942.80" fill="#fff" font-size="23" >print</text>
<path d="M494.7,958.6 V948.90 M494.7,927.40 V918.0 H690.6" fill="none" stroke="#71197f" stroke-width="1.3"/>
<path d="M494.7,959.0 H690.6 V918.0" fill="none" stroke="#c271d0" stroke-width="1.3"/>
<path d="M495.2,918.6 H688 A2,2 0 0 1 690,920.6 V956.4 A2,2 0 0 1 688,958.4 H495.2 V948.90 c0,-14.33 -11.46,11.46 -11.46,-10.75 s11.46,3.58 11.46,-10.75 Z" fill="#5ba58c" />
<path d="M495.8,957.8 H689.4 V919.2" fill="none" stroke="#4b8773" stroke-width="1.1"/>
<path d="M495.8,948.90 V957.8 M495.8,927.40 V919.2 H689.4" fill="none" stroke="#8cc0ae" stroke-width="1.1"/>
<circle cx="515.30" cy="938.60" r="3.9" fill="#f2fff8"/>
<path d="M511.50,938.20 C511.50,933.20 514.80,929.20 519.30,927.60 L519.90,929.60 C517.10,931.20 515.90,933.20 515.90,936.20 Z" fill="#f2fff8" />
<circle cx="525.50" cy="938.60" r="3.9" fill="#f2fff8"/>
<path d="M521.70,938.20 C521.70,933.20 525.00,929.20 529.50,927.60 L530.10,929.60 C527.30,931.20 526.10,933.20 526.10,936.20 Z" fill="#f2fff8" />
<rect x="537.30" y="925.60" width="107.90" height="24.20" rx="5" fill="#c3ded4" />
<text x="544.70" y="944.50" fill="#000" font-size="23" >Colour1:</text>
<circle cx="657.70" cy="931.60" r="3.9" fill="#f2fff8"/>
<path d="M661.50,932.00 C661.50,937.00 658.20,941.00 653.70,942.60 L653.10,940.60 C655.90,939.00 657.10,937.00 657.10,934.00 Z" fill="#f2fff8" />
<circle cx="667.90" cy="931.60" r="3.9" fill="#f2fff8"/>
<path d="M671.70,932.00 C671.70,937.00 668.40,941.00 663.90,942.60 L663.30,940.60 C666.10,939.00 667.30,937.00 667.30,934.00 Z" fill="#f2fff8" />
<path d="M711.2,958.5 V948.60 M711.2,927.10 V917.6999999999999 H1100.6" fill="none" stroke="#71197f" stroke-width="1.3"/>
<path d="M711.2,958.9 H1100.6 V917.6999999999999" fill="none" stroke="#c271d0" stroke-width="1.3"/>
<path d="M711.7,918.3 H1098 A2,2 0 0 1 1100,920.3 V956.3 A2,2 0 0 1 1098,958.3 H711.7 V948.60 c0,-14.33 -11.46,11.46 -11.46,-10.75 s11.46,3.58 11.46,-10.75 Z" fill="#118676" />
<path d="M712.3000000000001,957.6999999999999 H1099.4 V918.9" fill="none" stroke="#0e6e61" stroke-width="1.1"/>
<path d="M712.3000000000001,948.60 V957.6999999999999 M712.3000000000001,927.10 V918.9 H1099.4" fill="none" stroke="#58aa9f" stroke-width="1.1"/>
<text x="726.20" y="945.00" fill="#fff" font-size="23" >Read</text>
<rect x="790.00" y="926.70" width="73.30" height="24.10" rx="5" fill="#a1cdc4" />
<text x="796.20" y="945.00" fill="#000" font-size="23" >hue</text>
<path d="M842.5,935.2 H855.8 L849.15,942 Z" fill="#118676" />
<text x="870.40" y="945.00" fill="#fff" font-size="23" >from</text>
<rect x="925.80" y="926.70" width="124.20" height="24.10" rx="5" fill="#a1cdc4" />
<text x="931.70" y="945.00" fill="#000" font-size="23" >m</text>
<path d="M367.3,966.3 H389.50 C391.00,966.3 396.50,972.5999999999999 399.00,972.5999999999999 H403.00 C405.50,972.5999999999999 411.00,966.3 412.50,966.3 H507.7 A3,3 0 0 1 510.7,969.3 V1086.8999999999999 H412.50 C411.00,1086.8999999999999 405.50,1093.1999999999998 403.00,1093.1999999999998 H399.00 C396.50,1093.1999999999998 391.00,1086.8999999999999 389.50,1086.8999999999999 H367.3 Z" fill="#199b0b" />
<path d="M367.3,967.0 H389.50 C391.00,967.0 396.50,973.3 399.00,973.3 H403.00 C405.50,973.3 411.00,967.0 412.50,967.0 H507.7" fill="none" stroke="#65bc5c" stroke-width="1.3"/>
<path d="M367.3,1086.3 H389.5 M412.5,1086.3 H510.7" fill="none" stroke="#147909" stroke-width="1.2"/>
<text x="381.70" y="993.90" fill="#fff" font-size="23" >Set LEDs</text>
<rect x="383.00" y="1024.80" width="6.30" height="2.80" rx="0" fill="#fff" />
<rect x="446.00" y="1024.80" width="6.50" height="2.80" rx="0" fill="#fff" />
<rect x="397.60" y="1013.90" width="40.80" height="24.60" rx="5" fill="#ffffff" />
<rect x="461.40" y="1013.90" width="40.20" height="24.60" rx="5" fill="#0000ff" />
<rect x="383.00" y="1065.05" width="6.30" height="2.80" rx="0" fill="#fff" />
<rect x="446.00" y="1065.05" width="6.50" height="2.80" rx="0" fill="#fff" />
<rect x="397.60" y="1054.10" width="40.80" height="24.70" rx="5" fill="#00ff00" />
<rect x="461.40" y="1054.10" width="40.20" height="24.70" rx="5" fill="#ff0000" />
<path d="M367.3,1086.9 H389.50 C391.00,1086.9 396.50,1093.2 399.00,1093.2 H403.00 C405.50,1093.2 411.00,1086.9 412.50,1086.9 H997 A3,3 0 0 1 1000,1089.9 V1144.1 H412.50 C411.00,1144.1 405.50,1150.3999999999999 403.00,1150.3999999999999 H399.00 C396.50,1150.3999999999999 391.00,1144.1 389.50,1144.1 H367.3 Z" fill="#a5420b" />
<path d="M367.3,1087.6000000000001 H389.50 C391.00,1087.6000000000001 396.50,1093.9 399.00,1093.9 H403.00 C405.50,1093.9 411.00,1087.6000000000001 412.50,1087.6000000000001 H997" fill="none" stroke="#c3805c" stroke-width="1.3"/>
<path d="M367.3,1143.5 H389.5 M412.5,1143.5 H1000" fill="none" stroke="#813309" stroke-width="1.2"/>
<text x="382.10" y="1121.00" fill="#fff" font-size="23" >Move</text>
<rect x="445.90" y="1102.20" width="134.40" height="25.00" rx="5" fill="#d9a48b" />
<text x="452.45" y="1121.00" fill="#000" font-size="23" >backward</text>
<path d="M558.4,1111.8 H571.7 L565.05,1118.8 Z" fill="#a5420b" />
<text x="586.70" y="1121.00" fill="#fff" font-size="23" >at speed</text>
<path d="M702.2,1137.4 V1127.00 M702.2,1105.50 V1095.7 H820.8000000000001" fill="none" stroke="#732e08" stroke-width="1.3"/>
<path d="M702.2,1137.8 H820.8000000000001 V1095.7" fill="none" stroke="#c48460" stroke-width="1.3"/>
<path d="M702.7,1096.3 H818.2 A2,2 0 0 1 820.2,1098.3 V1135.2 A2,2 0 0 1 818.2,1137.2 H702.7 V1127.00 c0,-14.33 -11.46,11.46 -11.46,-10.75 s11.46,3.58 11.46,-10.75 Z" fill="#a55b80" />
<path d="M703.3000000000001,1136.6000000000001 H819.6 V1096.8999999999999" fill="none" stroke="#874b69" stroke-width="1.1"/>
<path d="M703.3000000000001,1127.00 V1136.6000000000001 M703.3000000000001,1105.50 V1096.8999999999999 H819.6" fill="none" stroke="#c08ca6" stroke-width="1.1"/>
<rect x="710.20" y="1103.80" width="99.20" height="25.00" rx="5" fill="#dbbccb" />
<text x="717.30" y="1122.30" fill="#000" font-size="23" >speed</text>
<path d="M788.4,1112.1 H800.1999999999999 L794.3,1118.8999999999999 Z" fill="#a55b80" />
<text x="833.20" y="1121.00" fill="#fff" font-size="23" >for</text>
<path d="M887.8,1137.4 V1127.00 M887.8,1105.50 V1095.7 H1100.6" fill="none" stroke="#732e08" stroke-width="1.3"/>
<path d="M887.8,1137.8 H1100.6 V1095.7" fill="none" stroke="#c48460" stroke-width="1.3"/>
<path d="M888.3,1096.3 H1098 A2,2 0 0 1 1100,1098.3 V1135.2 A2,2 0 0 1 1098,1137.2 H888.3 V1127.00 c0,-14.33 -11.46,11.46 -11.46,-10.75 s11.46,3.58 11.46,-10.75 Z" fill="#a55b80" />
<path d="M888.9,1136.6000000000001 H1099.4 V1096.8999999999999" fill="none" stroke="#874b69" stroke-width="1.1"/>
<path d="M888.9,1127.00 V1136.6000000000001 M888.9,1105.50 V1096.8999999999999 H1099.4" fill="none" stroke="#c08ca6" stroke-width="1.1"/>
<rect x="895.80" y="1103.80" width="154.20" height="25.00" rx="5" fill="#dbbccb" />
<text x="902.70" y="1122.30" fill="#000" font-size="23" >duration</text>
<path d="M367.3,1144.1 H389.50 C391.00,1144.1 396.50,1150.3999999999999 399.00,1150.3999999999999 H403.00 C405.50,1150.3999999999999 411.00,1144.1 412.50,1144.1 H507.7 A3,3 0 0 1 510.7,1147.1 V1264.6999999999998 H412.50 C411.00,1264.6999999999998 405.50,1270.9999999999998 403.00,1270.9999999999998 H399.00 C396.50,1270.9999999999998 391.00,1264.6999999999998 389.50,1264.6999999999998 H367.3 Z" fill="#199b0b" />
<path d="M367.3,1144.8 H389.50 C391.00,1144.8 396.50,1151.1 399.00,1151.1 H403.00 C405.50,1151.1 411.00,1144.8 412.50,1144.8 H507.7" fill="none" stroke="#65bc5c" stroke-width="1.3"/>
<path d="M367.3,1264.1 H389.5 M412.5,1264.1 H510.7" fill="none" stroke="#147909" stroke-width="1.2"/>
<text x="381.70" y="1171.70" fill="#fff" font-size="23" >Set LEDs</text>
<rect x="383.00" y="1202.60" width="6.30" height="2.80" rx="0" fill="#fff" />
<rect x="446.00" y="1202.60" width="6.50" height="2.80" rx="0" fill="#fff" />
<rect x="397.60" y="1191.70" width="40.80" height="24.60" rx="5" fill="#ffffff" />
<rect x="461.40" y="1191.70" width="40.20" height="24.60" rx="5" fill="#ffffff" />
<rect x="383.00" y="1242.85" width="6.30" height="2.80" rx="0" fill="#fff" />
<rect x="446.00" y="1242.85" width="6.50" height="2.80" rx="0" fill="#fff" />
<rect x="397.60" y="1231.90" width="40.80" height="24.70" rx="5" fill="#ffffff" />
<rect x="461.40" y="1231.90" width="40.20" height="24.70" rx="5" fill="#ffffff" />
<path d="M367.3,1264.9 H389.50 C391.00,1264.9 396.50,1271.2 399.00,1271.2 H403.00 C405.50,1271.2 411.00,1264.9 412.50,1264.9 H997 A3,3 0 0 1 1000,1267.9 V1330 H412.50 C411.00,1330 405.50,1336.3 403.00,1336.3 H399.00 C396.50,1336.3 391.00,1330 389.50,1330 H367.3 Z" fill="#a5420b" />
<path d="M367.3,1265.6000000000001 H389.50 C391.00,1265.6000000000001 396.50,1271.9 399.00,1271.9 H403.00 C405.50,1271.9 411.00,1265.6000000000001 412.50,1265.6000000000001 H997" fill="none" stroke="#c3805c" stroke-width="1.3"/>
<path d="M367.3,1329.4 H389.5 M412.5,1329.4 H1000" fill="none" stroke="#813309" stroke-width="1.2"/>
<text x="382.10" y="1300.30" fill="#fff" font-size="23" >Turn</text>
<rect x="433.00" y="1280.50" width="92.00" height="25.00" rx="5" fill="#d9a48b" />
<text x="439.70" y="1300.30" fill="#000" font-size="23" >left</text>
<text x="530.60" y="1300.30" fill="#fff" font-size="23" >at speed</text>
<path d="M634.5,1315.6000000000001 V1305.20 M634.5,1283.70 V1273.9 H762.2" fill="none" stroke="#732e08" stroke-width="1.3"/>
<path d="M634.5,1316.0 H762.2 V1273.9" fill="none" stroke="#c48460" stroke-width="1.3"/>
<path d="M635,1274.5 H759.6 A2,2 0 0 1 761.6,1276.5 V1313.4 A2,2 0 0 1 759.6,1315.4 H635 V1305.20 c0,-14.33 -11.46,11.46 -11.46,-10.75 s11.46,3.58 11.46,-10.75 Z" fill="#a55b80" />
<path d="M635.6,1314.8000000000002 H761.0 V1275.1" fill="none" stroke="#874b69" stroke-width="1.1"/>
<path d="M635.6,1305.20 V1314.8000000000002 M635.6,1283.70 V1275.1 H761.0" fill="none" stroke="#c08ca6" stroke-width="1.1"/>
<rect x="642.50" y="1282.00" width="109.70" height="25.00" rx="5" fill="#dbbccb" />
<text x="660.40" y="1300.50" fill="#000" font-size="23" >speed</text>
<path d="M731.2,1290.3 H743.0 L737.1,1297.1 Z" fill="#a55b80" />
<text x="775.70" y="1300.30" fill="#fff" font-size="23" >for</text>
<path d="M829.8,1315.6000000000001 V1305.20 M829.8,1283.70 V1273.9 H1100.6" fill="none" stroke="#732e08" stroke-width="1.3"/>
<path d="M829.8,1316.0 H1100.6 V1273.9" fill="none" stroke="#c48460" stroke-width="1.3"/>
<path d="M830.3,1274.5 H1098 A2,2 0 0 1 1100,1276.5 V1313.4 A2,2 0 0 1 1098,1315.4 H830.3 V1305.20 c0,-14.33 -11.46,11.46 -11.46,-10.75 s11.46,3.58 11.46,-10.75 Z" fill="#a55b80" />
<path d="M830.9,1314.8000000000002 H1099.4 V1275.1" fill="none" stroke="#874b69" stroke-width="1.1"/>
<path d="M830.9,1305.20 V1314.8000000000002 M830.9,1283.70 V1275.1 H1099.4" fill="none" stroke="#c08ca6" stroke-width="1.1"/>
<rect x="837.80" y="1282.00" width="212.20" height="25.00" rx="5" fill="#dbbccb" />
<text x="844.70" y="1300.50" fill="#000" font-size="23" >duration</text>
<g fill="#ff0000"><path d="M845.5 1155.6 L849 1151 H873 L876.5 1155.6 Z"/><rect x="828.1" y="1155.4" width="65.6" height="8.8"/><path d="M832.8 1169.5 H889 V1230 Q889 1235.2 884 1235.2 H837.8 Q832.8 1235.2 832.8 1230 Z"/></g><g fill="none" stroke="#9a9a9a" stroke-width="1.8"><circle cx="873" cy="965" r="18.2"/><path d="M873 943 V950 M873 980 V989 M849 965 H855 M891 965 H897"/><circle cx="873" cy="1032.1" r="24.1"/><path d="M862 1032.1 H884.7 M873.3 1021 V1043" stroke-width="2.2"/><circle cx="873" cy="1085.3" r="24.1"/><path d="M862 1084.6 H884.7" stroke-width="2.2"/></g><circle cx="873" cy="965" r="6" fill="#9a9a9a"/><rect x="933" y="375.5" width="13.5" height="390" rx="6.5" fill="#cccccc"/><rect x="414.7" y="1271" width="270.3" height="15.5" rx="7.7" fill="#c8c8c8"/></g>
<rect x="952" y="203" width="1" height="1087" fill="#c4c4c4"/>
</svg>
<!-- /WS -->
<div id="editor" class="a">
 <div id="gutter" class="a"></div>
 <div class="a" style="left:0;top:29.20px;width:941px;height:29.5px;background:#202020"></div>
 <div class="a" style="left:109.5px;top:239.26px;width:1px;height:29.62px;background:#3e3d36"></div>
 <div class="a" style="left:135.5px;top:239.26px;width:1px;height:29.62px;background:#3e3d36"></div>
 <div class="a" style="left:109.5px;top:387.36px;width:1px;height:29.62px;background:#3e3d36"></div>
 <div class="a" style="left:135.5px;top:387.36px;width:1px;height:29.62px;background:#3e3d36"></div>
 <div class="a" style="left:109.5px;top:476.22px;width:1px;height:29.62px;background:#3e3d36"></div>
 <div class="a" style="left:135.5px;top:476.22px;width:1px;height:29.62px;background:#3e3d36"></div>
 <div class="a code" style="left:0;top:3.3px;width:57.5px;text-align:right;color:#8f908a">1
2
3
4
5
6
7
8
9
10
11
12
13
14
15
16
17
18
19
20
21
22
23
24
25
26</div>
 <div class="a" style="left:97px;top:30px;width:1.5px;height:29px;background:#8a8a8a"></div>
 <div class="a code" style="left:83.5px;top:3.3px">speed <span style="color:#f92672">=</span> <span style="color:#ae81ff">15</span>
duration <span style="color:#f92672">=</span> <span style="color:#ae81ff">1</span>
Sounds.<span style="color:#66d9ef">playNote</span>(<span style="color:#ae81ff">2000</span>)
delay(<span style="color:#ae81ff">0.1</span>)
Sounds.<span style="color:#66d9ef">playNote</span>(<span style="color:#ae81ff">1000</span>)
delay(<span style="color:#ae81ff">0.1</span>)
Sounds.<span style="color:#66d9ef">play</span>(<span style="color:#ae81ff">60</span>)
LEDs.<span style="color:#66d9ef">writeAll</span>(Colour.<span style="color:#66d9ef">pick</span>(<span style="color:#ae81ff">255</span>, <span style="color:#ae81ff">0</span>, <span style="color:#ae81ff">0</span>), Colour.<span style="color:#66d9ef">pick</span>(<span style="color:#ae81ff">0</span>, <span style="color:#ae81ff">255</span>, <span style="color:#ae81ff">0</span>),
      Colour.<span style="color:#66d9ef">pick</span>(<span style="color:#ae81ff">0</span>, <span style="color:#ae81ff">0</span>, <span style="color:#ae81ff">255</span>), Colour.<span style="color:#66d9ef">pick</span>(<span style="color:#ae81ff">255</span>, <span style="color:#ae81ff">255</span>, <span style="color:#ae81ff">255</span>))
Motors.<span style="color:#66d9ef">write</span>(speed, speed, duration)
<span style="color:#f92672">print</span>(<span style="color:#e6db74">&#x27;Ultra1: &#x27;</span>, Ultrasonic.<span style="color:#66d9ef">read</span>())
<span style="color:#f92672">print</span>(<span style="color:#e6db74">&#x27;Colour1: &#x27;</span>, Colour.<span style="color:#66d9ef">readSensor</span>(CS.<span style="color:#66d9ef">HUE</span>, <span style="color:#ae81ff">1</span>))
LEDs.<span style="color:#66d9ef">writeAll</span>(Colour.<span style="color:#66d9ef">pick</span>(<span style="color:#ae81ff">255</span>, <span style="color:#ae81ff">255</span>, <span style="color:#ae81ff">255</span>), Colour.<span style="color:#66d9ef">pick</span>(<span style="color:#ae81ff">0</span>, <span style="color:#ae81ff">0</span>, <span style="color:#ae81ff">255</span>),
      Colour.<span style="color:#66d9ef">pick</span>(<span style="color:#ae81ff">0</span>, <span style="color:#ae81ff">255</span>, <span style="color:#ae81ff">0</span>), Colour.<span style="color:#66d9ef">pick</span>(<span style="color:#ae81ff">255</span>, <span style="color:#ae81ff">0</span>, <span style="color:#ae81ff">0</span>))
Motors.<span style="color:#66d9ef">write</span>(<span style="color:#f92672">-</span>speed, <span style="color:#f92672">-</span>speed, duration)
LEDs.<span style="color:#66d9ef">writeAll</span>(Colour.<span style="color:#66d9ef">pick</span>(<span style="color:#ae81ff">255</span>, <span style="color:#ae81ff">255</span>, <span style="color:#ae81ff">255</span>), Colour.<span style="color:#66d9ef">pick</span>(<span style="color:#ae81ff">255</span>, <span style="color:#ae81ff">255</span>, <span style="color:#ae81ff">255</span>),
      Colour.<span style="color:#66d9ef">pick</span>(<span style="color:#ae81ff">255</span>, <span style="color:#ae81ff">255</span>, <span style="color:#ae81ff">255</span>), Colour.<span style="color:#66d9ef">pick</span>(<span style="color:#ae81ff">255</span>, <span style="color:#ae81ff">255</span>, <span style="color:#ae81ff">255</span>))
Motors.<span style="color:#66d9ef">turn</span>(<span style="color:#f92672">-</span>speed, duration)
Motors.<span style="color:#66d9ef">turn</span>(speed, duration)
<span style="color:#f92672">print</span>(<span style="color:#e6db74">&#x27;Ultra2: &#x27;</span>, Ultrasonic.<span style="color:#66d9ef">read</span>())
<span style="color:#f92672">print</span>(<span style="color:#e6db74">&#x27;Colour2: &#x27;</span>, Colour.<span style="color:#66d9ef">readSensor</span>(CS.<span style="color:#66d9ef">HUE</span>, <span style="color:#ae81ff">1</span>))
Motors.<span style="color:#66d9ef">write</span>(speed, speed)
delay(duration)
Motors.<span style="color:#66d9ef">write</span>(<span style="color:#f92672">-</span>speed, <span style="color:#f92672">-</span>speed)
delay(duration)
Motors.<span style="color:#66d9ef">turn</span>(<span style="color:#f92672">-</span>speed)</div>
 <div class="a" style="left:917.5px;top:7.5px;width:16px;height:561px;background:#a9a9a9;border-radius:8px"></div>
 <div class="a" style="left:894px;top:7px;width:47px;height:47.5px;background:rgba(250,250,250,0.49);border-radius:7px 0 0 7px"></div>
 <svg class="a" style="left:894px;top:7px" width="47" height="48" viewBox="1862 210 47 48"><path d="M1884 224.5 L1873.3 234.3 L1884 244.2" fill="none" stroke="#111" stroke-width="3.2" stroke-linecap="round" stroke-linejoin="round"/><path d="M1896.5 224.5 L1885.8 234.3 L1896.5 244.2" fill="none" stroke="#6a6a6a" stroke-width="3.2" stroke-linecap="round" stroke-linejoin="round"/></svg>
 <div class="a" style="left:85px;top:744.5px;width:836px;height:10px;background:#a9a9a9;border-radius:5px"></div>
</div>
<div id="console" class="a">
 <div class="a" style="left:11px;top:14.8px;font-family:'Liberation Mono',monospace;font-size:26.3px;line-height:35.5px;color:#b4b4b4;white-space:pre;-webkit-text-stroke:0.4px currentColor">&gt; test
Test program 0-original.py loaded
&gt;</div>
</div>
</body></html>
